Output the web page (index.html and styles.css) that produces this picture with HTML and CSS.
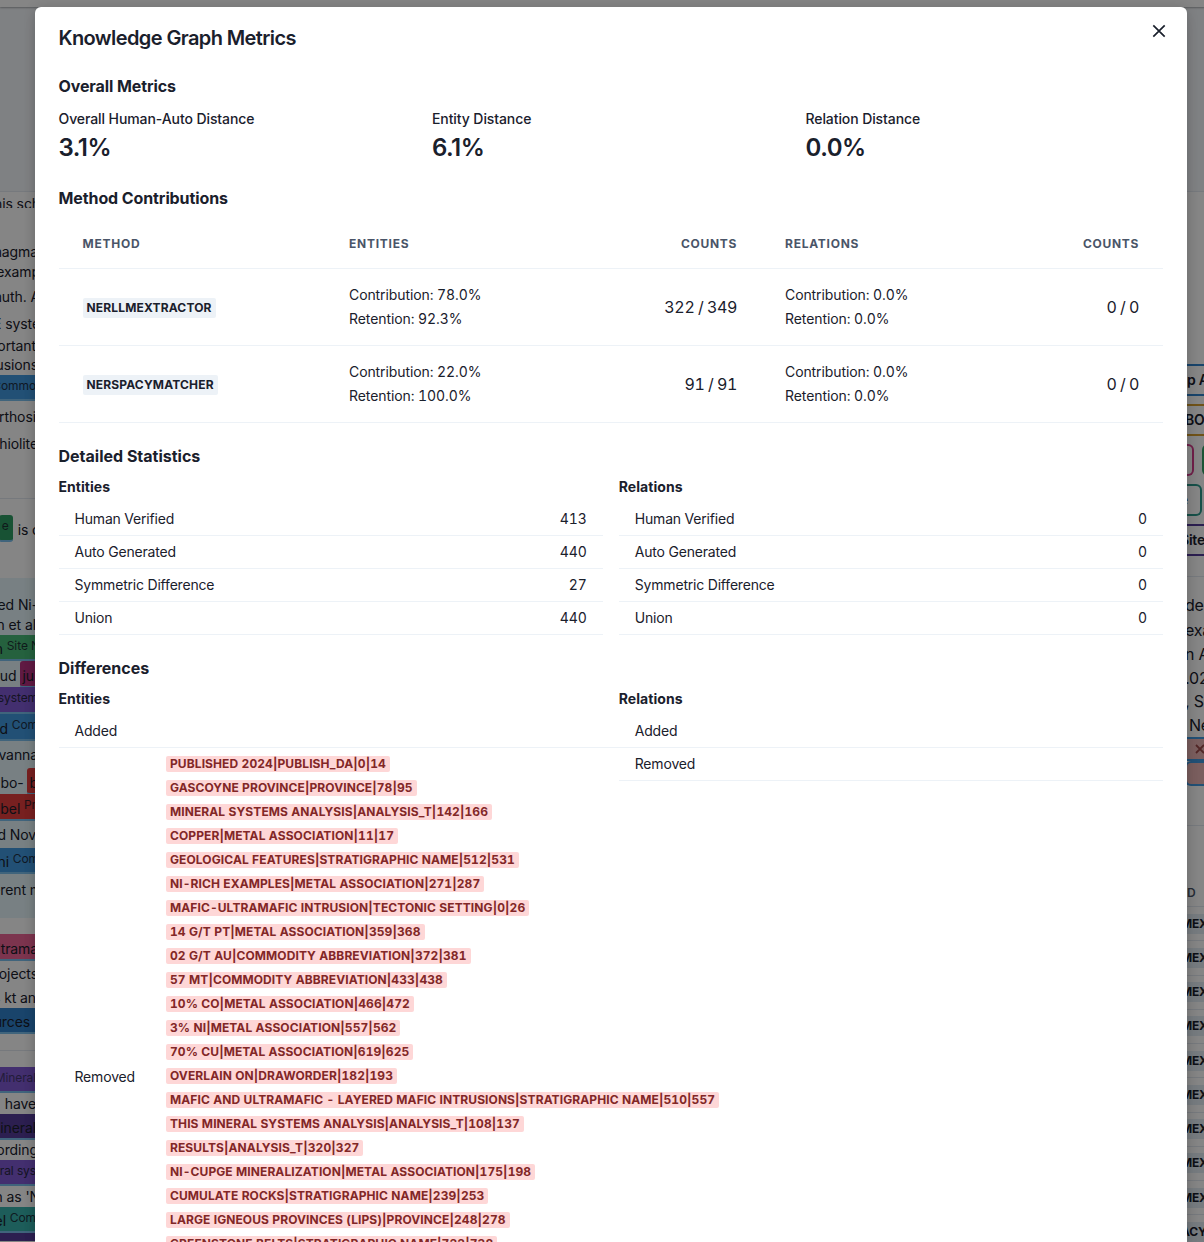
FILE: index.html
```html
<!DOCTYPE html>
<html lang="en">
<head>
<meta charset="utf-8">
<title>Knowledge Graph Metrics</title>
<link rel="stylesheet" href="styles.css">
</head>
<body>
<div class="page">
  <div class="doc">
    <div class="topbar"></div><div class="hero"></div><div class="rule"></div>
    <p class="cut e2">this sch</p><i></i>
    <p class="e1">magma</p><p class="e2">examp</p><p class="e2">Bismuth. A</p><p class="e2">NE syste</p><p>important</p><p class="e1">intrusions</p>
    <p class="band blue"><small>Commo</small></p>
    <p>orthosi</p><p class="e1">ophiolite</p><i></i><div class="rule"></div><i></i>
    <p class="mixed e2"><span class="tag green"><small>e</small></span><span>is c</span></p><i></i>
    <i class="tint"></i>
    <p class="tint e1">hosted Ni-</p><p class="tint">Lin et al</p>
    <p class="band lime e2">n <small>Site N</small></p>
    <p class="tint mixed e1"><span>clud</span><span class="tag magenta">ju</span></p>
    <p class="band purple e1"><small>system</small></p>
    <p class="band blue e1">d <small>Com</small></p>
    <p class="tint e1">savanna</p>
    <p class="tint mixed e4"><span>bo-</span><span class="tag red">b</span></p>
    <p class="band red">bel <small>Pr</small></p>
    <p class="tint">d Nov</p>
    <p class="band blue e3">ni <small>Com</small></p>
    <p class="tint e4">different m</p><i class="tint"></i><i></i>
    <p class="band pink e1">ultrama</p>
    <p class="e1">projects</p><p>4 kt an</p>
    <p class="band deepblue resources">resources</p><i></i><div class="rule"></div><i></i>
    <p class="band purple faint"><small>Mineral</small></p>
    <p>have</p>
    <p class="band violet">mineral</p>
    <p class="e1">according</p>
    <p class="band purple"><small>mineral sys</small></p>
    <p class="e2">in as 'N</p>
    <p class="band teal">el <small>Com</small></p>
    <div class="violet"></div><i></i>
  </div>
  <div class="aside">
    <div class="topbar"></div><div class="hero"></div><div class="rule"></div><i></i>
    <p class="label l-blue">p A</p><i></i>
    <p class="label l-yellow">BO</p><i></i>
    <div class="chips"><span class="chip c-pink"></span><span class="chip c-green"></span></div><i></i>
    <div class="chips"><span class="chip c-teal">e</span></div><i></i>
    <p class="label l-violet">Site</p><i></i><div class="rule"></div><i></i>
    <p>de</p><p>exa</p><p>n A</p><p>.02</p><p>, S</p><p class="ne">Ne</p>
    <div class="mark"><svg width="10" height="10" viewBox="0 0 10 10"><path d="M1 1l8 8M9 1l-8 8"/></svg></div>
    <div class="mark round"></div><i></i><div class="rule"></div><i></i>
    <p class="th">D</p>
    <div class="codes">
      <p><b>MEX</b></p><p><b>MEX</b></p><p><b>MEX</b></p><p><b>MEX</b></p><p><b>MEX</b></p>
      <p><b>MEX</b></p><p><b>MEX</b></p><p><b>MEX</b></p><p><b>MEX</b></p><p><b>ACY</b></p>
    </div>
  </div>
</div>
<div class="overlay"></div>
<section class="modal">
  <header><h1>Knowledge Graph Metrics</h1>
    <svg class="close" width="14" height="14" viewBox="0 0 14 14"><path d="M1.3 1.3l11.4 11.4M12.7 1.3L1.3 12.7"/></svg>
  </header>
  <h2 class="h-overall">Overall Metrics</h2>
  <div class="stats">
    <div><div class="stat-label">Overall Human-Auto Distance</div><div class="stat-value">3.1%</div></div>
    <div><div class="stat-label">Entity Distance</div><div class="stat-value">6.1%</div></div>
    <div><div class="stat-label">Relation Distance</div><div class="stat-value">0.0%</div></div>
  </div>
  <h2 class="h-method">Method Contributions</h2>
  <div class="methods">
    <div class="row head"><span>METHOD</span><span>ENTITIES</span><span class="count">COUNTS</span><span>RELATIONS</span><span class="count">COUNTS</span></div>
    <div class="row"><span><b class="badge">NERLLMEXTRACTOR</b></span><span>Contribution: 78.0%<br>Retention: 92.3%</span><span class="count">322 / 349</span><span>Contribution: 0.0%<br>Retention: 0.0%</span><span class="count">0 / 0</span></div>
    <div class="row"><span><b class="badge">NERSPACYMATCHER</b></span><span>Contribution: 22.0%<br>Retention: 100.0%</span><span class="count">91 / 91</span><span>Contribution: 0.0%<br>Retention: 0.0%</span><span class="count">0 / 0</span></div>
  </div>
  <h2 class="h-block">Detailed Statistics</h2>
  <div class="pair">
    <div><h3>Entities</h3>
      <div class="item"><span>Human Verified</span><span>413</span></div>
      <div class="item"><span>Auto Generated</span><span>440</span></div>
      <div class="item"><span>Symmetric Difference</span><span>27</span></div>
      <div class="item"><span>Union</span><span>440</span></div>
    </div>
    <div><h3>Relations</h3>
      <div class="item"><span>Human Verified</span><span>0</span></div>
      <div class="item"><span>Auto Generated</span><span>0</span></div>
      <div class="item"><span>Symmetric Difference</span><span>0</span></div>
      <div class="item"><span>Union</span><span>0</span></div>
    </div>
  </div>
  <h2 class="h-block">Differences</h2>
  <div class="pair">
    <div><h3>Entities</h3>
      <div class="item wide"><span>Added</span></div>
      <div class="removed"><span class="removed-label">Removed</span>
        <ul>
          <li><b>PUBLISHED 2024|PUBLISH_DA|0|14</b></li>
          <li><b>GASCOYNE PROVINCE|PROVINCE|78|95</b></li>
          <li><b>MINERAL SYSTEMS ANALYSIS|ANALYSIS_T|142|166</b></li>
          <li><b>COPPER|METAL ASSOCIATION|11|17</b></li>
          <li><b>GEOLOGICAL FEATURES|STRATIGRAPHIC NAME|512|531</b></li>
          <li><b>NI-RICH EXAMPLES|METAL ASSOCIATION|271|287</b></li>
          <li><b>MAFIC-ULTRAMAFIC INTRUSION|TECTONIC SETTING|0|26</b></li>
          <li><b>14 G/T PT|METAL ASSOCIATION|359|368</b></li>
          <li><b>02 G/T AU|COMMODITY ABBREVIATION|372|381</b></li>
          <li><b>57 MT|COMMODITY ABBREVIATION|433|438</b></li>
          <li><b>10% CO|METAL ASSOCIATION|466|472</b></li>
          <li><b>3% NI|METAL ASSOCIATION|557|562</b></li>
          <li><b>70% CU|METAL ASSOCIATION|619|625</b></li>
          <li><b>OVERLAIN ON|DRAWORDER|182|193</b></li>
          <li><b>MAFIC AND ULTRAMAFIC - LAYERED MAFIC INTRUSIONS|STRATIGRAPHIC NAME|510|557</b></li>
          <li><b>THIS MINERAL SYSTEMS ANALYSIS|ANALYSIS_T|108|137</b></li>
          <li><b>RESULTS|ANALYSIS_T|320|327</b></li>
          <li><b>NI-CUPGE MINERALIZATION|METAL ASSOCIATION|175|198</b></li>
          <li><b>CUMULATE ROCKS|STRATIGRAPHIC NAME|239|253</b></li>
          <li><b>LARGE IGNEOUS PROVINCES (LIPS)|PROVINCE|248|278</b></li>
          <li><b>GREENSTONE BELTS|STRATIGRAPHIC NAME|722|738</b></li>
        </ul>
      </div>
    </div>
    <div><h3>Relations</h3>
      <div class="item"><span>Added</span></div>
      <div class="item"><span>Removed</span></div>
    </div>
  </div>
</section>
</body>
</html>
```
FILE: styles.css
```css
* { box-sizing: border-box; }
html, body { margin: 0; height: 1242px; overflow: hidden; }
body { position: relative; font-family: Inter, "Liberation Sans", sans-serif; color: #1a202c; background: #fff; }
h1, h2, h3, p, ul { margin: 0; padding: 0; }
ul { list-style: none; }

/* page behind the dialog */
.page { display: flex; justify-content: space-between; height: 1242px; background: #fff; }
.doc, .aside { display: grid; overflow: hidden; align-content: start; }
.doc {
  width: 44px;
  grid-template-rows: 7px 184px 1px 16px 34px 20px 20px 30px 24px 19px 20px 26px 32px 22px 43px 1px 16px 27px 36px 17px 20px 20px 26px 26px 27px 27px 27px 26px 27px 27px 26px 32px 12px 16px 27px 26px 21px 26px 16px 1px 16px 26px 21px 26px 20px 26px 21px 26px 8px 1px;
}
.aside {
  width: 24px;
  grid-template-rows: 7px 184px 1px 172px 32px 8px 32px 8px 32px 8px 32px 8px 32px 20px 1px 16px 25px 24px 24px 23px 24px 24px 24px 25px 39px 1px 54px 27px 343px;
}
.topbar { background: #fff; box-shadow: 0 1px 2px rgba(0,0,0,.3); position: relative; }
.hero { background: #f3f7fb; }
.rule { background: #e2e8f0; }
.doc p { display: flex; align-items: center; justify-content: flex-end; padding-right: 8px; font-size: 14px; line-height: 20px; letter-spacing: -.1px; white-space: pre; min-width: 0; }
.doc .cut { align-items: flex-start; line-height: 24px; overflow: hidden; }
.doc .e1 { padding-right: 6px; }
.doc .e2 { padding-right: 4px; }
.doc .e3 { padding-right: 5px; }
.doc .e4 { padding-right: 2px; }
.doc small { font-size: 12px; opacity: .85; padding-bottom: 7px; }
.doc .faint small { opacity: .6; }
.doc .band { border-bottom: 2px solid #7cc0ee; padding-top: 4px; }
.tint { background: #e6f6fc; }
.blue { background: #4299e1; }
.deepblue { background: #3182ce; }
.lime { background: #48bb78; }
.purple { background: #805ad5; }
.violet { background: #553c9a; }
.red { background: #e53e3e; }
.pink { background: #ed6496; }
.teal { background: #38b2ac; }
.green { background: #2f9e64; }
.magenta { background: #b83280; }
.doc .resources { padding-right: 14px; }
.doc .mixed { align-items: stretch; gap: 3px; line-height: 30px; }
.doc .tag { border-radius: 3px; border-bottom: 2px solid #7cc0ee; padding: 0 4px 0 3px; height: 27px; }
.doc .green { margin-right: 2px; line-height: 20px; }

.aside p { padding-left: 5px; font-size: 16px; line-height: 24px; white-space: nowrap; overflow: hidden; letter-spacing: -.2px; }
.aside .label { font-size: 14px; font-weight: 600; line-height: 28px; border: solid; border-width: 2px 0; padding-left: 7px; }
.aside .l-blue { border-color: #3182ce; }
.aside .l-yellow { border-color: #d69e2e; padding-left: 5px; }
.aside .l-violet { border-color: #553c9a; padding-left: 0; }
.aside .ne { padding-left: 9px; }
.chips { display: flex; gap: 8px; overflow: hidden; }
.chip { width: 14px; flex: none; border: 2px solid #d53f8c; border-left: 0; border-radius: 0 6px 6px 0; font-size: 14px; line-height: 28px; }
.c-green { border: 2px solid #38a169; border-radius: 6px 0 0 6px; background: #48bb78; }
.c-teal { width: 22px; border-color: #2c9a8c; }
.mark { border: solid #4299e1; border-width: 2px 0; background: #eab5b5; display: flex; align-items: center; padding-left: 15px; }
.mark svg { flex: none; stroke: #9b4a4a; stroke-width: 1.8; fill: none; }
.round { border-left: 2px solid #4299e1; border-radius: 6px 0 0 6px; margin-left: 5px; }
.aside .th { font-size: 12px; font-weight: 600; color: #4a5568; line-height: 26px; border-bottom: 1px solid #e2e8f0; padding-left: 7px; }
.codes { display: grid; grid-template-rows: repeat(10, 34.25px); }
.aside .codes p { display: flex; align-items: center; border-bottom: 1px solid #e2e8f0; padding: 0; }
.codes b { font-size: 12px; line-height: 20px; background: #e2ecf3; width: 24px; padding-left: 1px; }

.overlay { position: absolute; inset: 0; background: rgba(0,0,0,.48); }

/* dialog */
.modal { position: absolute; left: 35px; top: 7px; width: 1152px; height: 1235px; overflow: hidden; padding: 16px 24px 0 23.5px; background: #fff; border-radius: 6px 6px 0 0; box-shadow: 0 10px 15px -3px rgba(0,0,0,.1), 0 4px 6px -2px rgba(0,0,0,.05), 0 0 12px rgba(0,0,0,.15); }
header { display: flex; justify-content: space-between; height: 30px; }
h1 { font-size: 20px; line-height: 30px; font-weight: 600; letter-spacing: -.6px; }
.close { margin: 1px -3px 0 0; fill: none; stroke: #1a202c; stroke-width: 1.7; }
h2 { font-size: 16px; line-height: 20px; font-weight: 700; letter-spacing: -.1px; }
h3 { font-size: 14px; line-height: 20px; font-weight: 700; letter-spacing: .05px; margin: 0 0 6px; }
.h-overall { margin-top: 23px; }
.stats { display: grid; grid-template-columns: repeat(3, 1fr); column-gap: 16px; margin-top: 12px; }
.stat-label { font-size: 14px; line-height: 21px; font-weight: 500; letter-spacing: -.09px; }
.stat-value { font-size: 24px; line-height: 36px; font-weight: 600; letter-spacing: -.5px; padding-top: 1px; }
.h-method { margin-top: 22px; }
.methods { margin-top: 12px; font-variant-numeric: lining-nums tabular-nums; }
.row { display: grid; grid-template-columns: 266.5px 272px 164px 247px 155px; height: 77px; align-items: center; border-bottom: 1px solid #edf2f7; font-size: 14px; line-height: 24px; letter-spacing: -.09px; }
.row > span { padding: 0 24px; }
.row .count { text-align: right; font-size: 16px; padding-left: 0; letter-spacing: -.35px; word-spacing: -.4px; }
.row.head { height: 49px; font-size: 12px; line-height: 16px; font-weight: 700; letter-spacing: .75px; color: #4a5568; }
.row.head .count { font-size: 12px; letter-spacing: .7px; }
.badge { display: inline-block; padding: 0 4px; font-size: 12px; line-height: 20px; background: #edf2f7; border-radius: 2px; font-weight: 700; letter-spacing: .16px; }
.h-block { margin-top: 23px; }
.h-block { letter-spacing: 0; }
.pair { display: grid; grid-template-columns: repeat(2, minmax(0, 1fr)); column-gap: 16px; margin-top: 11px; font-variant-numeric: lining-nums tabular-nums; }
.item { display: flex; justify-content: space-between; height: 33px; padding: 6px 16px; font-size: 14px; line-height: 20px; border-bottom: 1px solid #edf2f7; letter-spacing: -.18px; }
.item span + span { letter-spacing: -.1px; }
.item.wide { width: 673px; }
.removed { display: flex; align-items: center; width: 673px; height: 656px; padding: 4px 16px; font-size: 14px; white-space: nowrap; }
.removed-label { width: 91.5px; flex: none; letter-spacing: -.18px; }
.removed ul { height: 648px; }
.removed li { height: 24px; padding: 4px 0; display: flex; }
.removed b { font-size: 12px; line-height: 16px; padding: 0 4px; color: #822727; background: #fed7d7; border-radius: 2px; font-weight: 700; letter-spacing: .09px; }
```
